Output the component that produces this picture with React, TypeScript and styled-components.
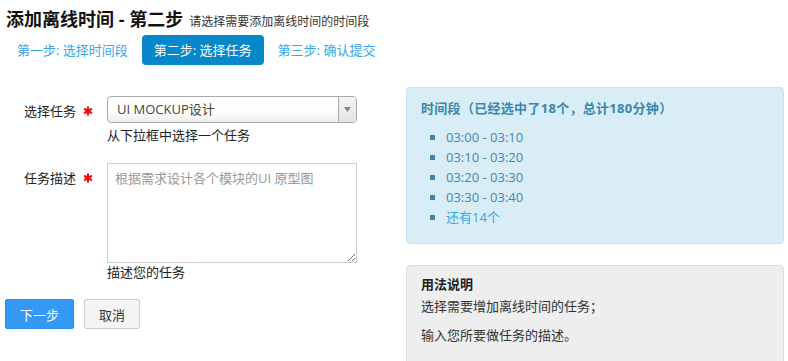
import React from "react";
import styled, { createGlobalStyle } from "styled-components";

const GlobalStyle = createGlobalStyle`
  html, body {
    margin: 0;
    padding: 0;
    background: #ffffff;
  }
  body {
    font-family: "Open Sans", "Noto Sans CJK SC", sans-serif;
    font-size: 13px;
    color: #333333;
  }
`;

const Page = styled.div`
  padding: 0 4px 0 5px;
`;

const Header = styled.div`
  padding-top: 8px;
`;

const Title = styled.h1`
  margin: 0 0 0 1px;
  height: 22px;
  display: flex;
  align-items: baseline;
  font-size: 18px;
  line-height: 22px;
  font-weight: 700;
  color: #111111;
`;

const SubTitle = styled.small`
  margin-left: 6px;
  font-size: 12px;
  line-height: 22px;
  font-weight: 400;
  color: #333333;
`;

const Tabs = styled.nav`
  display: flex;
  gap: 2px;
  margin-top: 5px;
`;

const Tab = styled.a<{ active?: boolean }>`
  display: block;
  padding: 0 12px;
  height: 30px;
  line-height: 30px;
  border-radius: 4px;
  font-size: 13px;
  text-decoration: none;
  cursor: pointer;
  color: ${(p) => (p.active ? "#ffffff" : "#38a6e6")};
  background: ${(p) => (p.active ? "#0788cb" : "transparent")};
`;

const Content = styled.div`
  display: flex;
  align-items: flex-start;
  gap: 17px;
  margin-top: 22px;
`;

const FormColumn = styled.div`
  flex: 1;
  padding-top: 9px;
`;

const FormRow = styled.div<{ spacing: number }>`
  display: flex;
  align-items: flex-start;
  gap: 2px;
  margin-bottom: ${(p) => p.spacing}px;
`;

const Label = styled.label`
  width: 100px;
  padding-right: 12px;
  box-sizing: border-box;
  display: flex;
  justify-content: flex-end;
  align-items: center;
  gap: 7px;
  height: 29px;
  color: #222222;
`;

const Required = styled.span`
  display: inline-flex;
  color: #ee1111;
`;

const Control = styled.div`
  width: 250px;
`;

const Select = styled.div`
  display: flex;
  height: 27px;
  box-sizing: border-box;
  border: 1px solid #aaaaaa;
  border-radius: 4px;
  background: linear-gradient(to bottom, #ffffff 0%, #ffffff 50%, #eeeeee 100%);
  overflow: hidden;
`;

const SelectValue = styled.span`
  flex: 1;
  padding-left: 9px;
  line-height: 25px;
  color: #444444;
`;

const SelectArrow = styled.span`
  width: 17px;
  border-left: 1px solid #aaaaaa;
  background: linear-gradient(to bottom, #f4f4f4, #e4e4e4);
  display: flex;
  align-items: center;
  justify-content: center;
`;

const Help = styled.div<{ tight?: boolean }>`
  margin-top: ${(p) => (p.tight ? "0" : "3px")};
  line-height: 18px;
  color: #222222;
`;

const TextArea = styled.textarea`
  display: block;
  width: 250px;
  height: 100px;
  box-sizing: border-box;
  margin: 0;
  padding: 4px 7px;
  border: 1px solid #cccccc;
  font-family: "Open Sans", "Noto Sans CJK SC", sans-serif;
  font-size: 13px;
  line-height: 20px;
  color: #333333;
  &::placeholder {
    color: #999999;
  }
`;

const Actions = styled.div`
  display: flex;
  gap: 10px;
`;

const Button = styled.button<{ primary?: boolean }>`
  height: 30px;
  padding: 0 14px;
  border-radius: 2px;
  font-family: "Open Sans", "Noto Sans CJK SC", sans-serif;
  font-size: 13px;
  cursor: pointer;
  border: 1px solid ${(p) => (p.primary ? "#2b8de6" : "#cccccc")};
  background: ${(p) => (p.primary ? "#3399f3" : "#f4f4f4")};
  color: ${(p) => (p.primary ? "#ffffff" : "#333333")};
`;

const SideColumn = styled.div`
  width: 378px;
  display: flex;
  flex-direction: column;
  gap: 21px;
`;

const InfoPanel = styled.div`
  border: 1px solid #bce8f1;
  border-radius: 4px;
  background: #d9edf7;
  color: #3a87ad;
  padding: 10px 14px 16px;
`;

const PanelTitle = styled.div`
  font-weight: 700;
  line-height: 20px;
  letter-spacing: 0.3px;
`;

const RangeList = styled.ul`
  list-style: none;
  margin: 9px 0 0;
  padding: 0;
`;

const RangeItem = styled.li`
  position: relative;
  padding-left: 25px;
  line-height: 20px;
  color: #4585b0;

  &::before {
    content: "";
    position: absolute;
    left: 9px;
    top: 8px;
    width: 5px;
    height: 5px;
    background: #3a87ad;
  }
`;

const MoreLink = styled.a`
  color: #38a6e6;
  text-decoration: none;
`;

const UsagePanel = styled.div`
  border: 1px solid #dddddd;
  border-radius: 4px;
  background: #eeeeee;
  padding: 8px 14px;
  min-height: 120px;
  color: #333333;
`;

const UsageTitle = styled.div`
  font-weight: 700;
  line-height: 20px;
  color: #222222;
`;

const UsageText = styled.p<{ gap: number }>`
  margin: ${(p) => p.gap}px 0 0;
  line-height: 20px;
`;

const AsteriskIcon = () => (
  <svg width="10" height="10" viewBox="0 0 10 10" stroke="currentColor" strokeWidth="2.2" strokeLinecap="butt">
    <line x1="5" y1="0.5" x2="5" y2="9.5" />
    <line x1="1.1" y1="2.75" x2="8.9" y2="7.25" />
    <line x1="1.1" y1="7.25" x2="8.9" y2="2.75" />
  </svg>
);

const CaretDown = () => (
  <svg width="7" height="5" viewBox="0 0 7 5">
    <polygon points="0,0 7,0 3.5,5" fill="#888888" />
  </svg>
);

const ranges = ["03:00 - 03:10", "03:10 - 03:20", "03:20 - 03:30", "03:30 - 03:40"];

export default function App() {
  return (
    <Page>
      <GlobalStyle />
      <Header>
        <Title>
          添加离线时间 - 第二步<SubTitle>请选择需要添加离线时间的时间段</SubTitle>
        </Title>
        <Tabs>
          <Tab>第一步: 选择时间段</Tab>
          <Tab active>第二步: 选择任务</Tab>
          <Tab>第三步: 确认提交</Tab>
        </Tabs>
      </Header>

      <Content>
        <FormColumn>
          <FormRow spacing={19}>
            <Label>
              选择任务
              <Required>
                <AsteriskIcon />
              </Required>
            </Label>
            <Control>
              <Select>
                <SelectValue>UI MOCKUP设计</SelectValue>
                <SelectArrow>
                  <CaretDown />
                </SelectArrow>
              </Select>
              <Help>从下拉框中选择一个任务</Help>
            </Control>
          </FormRow>

          <FormRow spacing={18}>
            <Label>
              任务描述
              <Required>
                <AsteriskIcon />
              </Required>
            </Label>
            <Control>
              <TextArea placeholder="根据需求设计各个模块的UI 原型图" />
              <Help tight>描述您的任务</Help>
            </Control>
          </FormRow>

          <Actions>
            <Button primary>下一步</Button>
            <Button>取消</Button>
          </Actions>
        </FormColumn>

        <SideColumn>
          <InfoPanel>
            <PanelTitle>时间段（已经选中了18个，总计180分钟）</PanelTitle>
            <RangeList>
              {ranges.map((r) => (
                <RangeItem key={r}>{r}</RangeItem>
              ))}
              <RangeItem>
                <MoreLink>还有14个</MoreLink>
              </RangeItem>
            </RangeList>
          </InfoPanel>

          <UsagePanel>
            <UsageTitle>用法说明</UsageTitle>
            <UsageText gap={2}>选择需要增加离线时间的任务；</UsageText>
            <UsageText gap={9}>输入您所要做任务的描述。</UsageText>
          </UsagePanel>
        </SideColumn>
      </Content>
    </Page>
  );
}
